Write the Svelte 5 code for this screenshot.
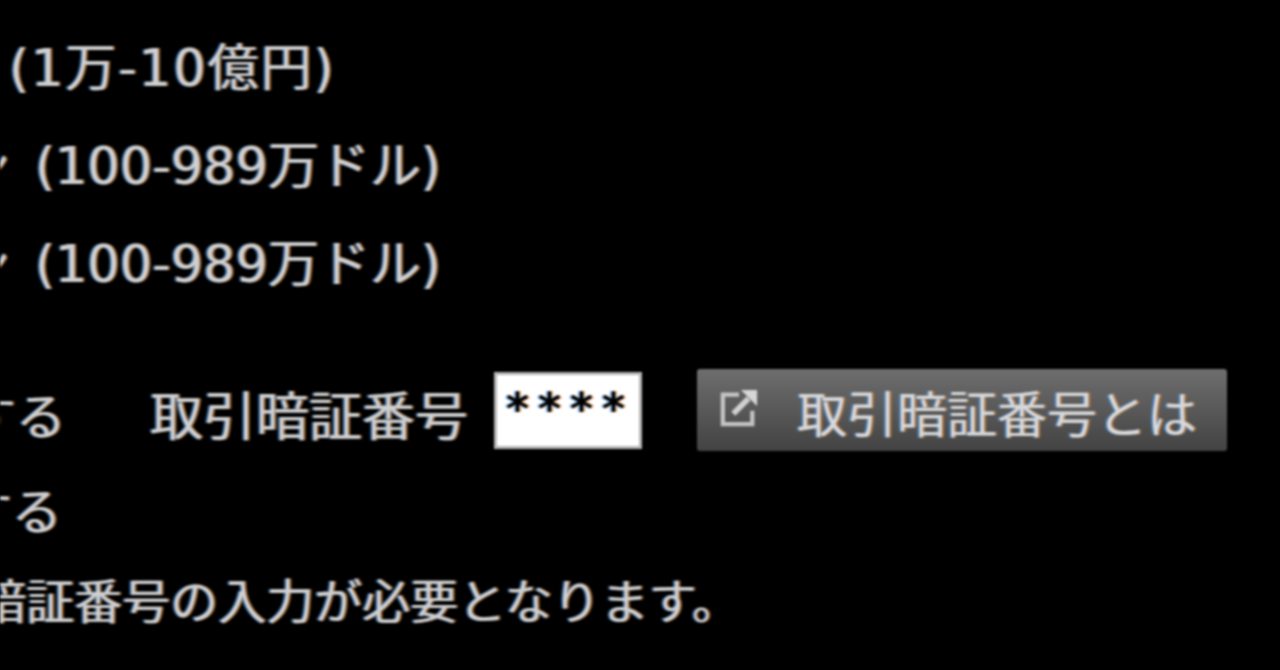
<script>
  const rows = [
    { lead: '', text: '(1万-10億円)', cls: 'r1' },
    { lead: 'ン', text: '(100-989万ドル)', cls: 'r2' },
    { lead: 'ン', text: '(100-989万ドル)', cls: 'r3' }
  ];
</script>

<main class="page">
  {#each rows as row}
    <div class="row {row.cls}">
      <span class="lead"><span>{row.lead}</span></span>
      <span class="paren">{row.text}</span>
    </div>
  {/each}

  <div class="row r4">
    <span class="lead"><span>設定する</span></span>
    <span class="label">取引暗証番号</span>
    <div class="input">****</div>
    <div class="btn">
      <svg viewBox="0 0 40 40" width="38" height="38" aria-hidden="true">
        <path d="M20 6H3v31h31V23" fill="none" stroke="#c4c4c4" stroke-width="4.5"/>
        <path d="M14 26L30 10" fill="none" stroke="#d0d0d0" stroke-width="6"/>
        <path d="M22 1H39V18z" fill="#d6d6d6"/>
      </svg>
      <span>取引暗証番号とは</span>
    </div>
  </div>
  <div class="row r5"><span class="lead"><span>設定する</span></span></div>
  <div class="row r6"><span class="lead"><span>取引暗証番号の入力が必要となります。</span></span></div>
</main>

<style>
  :global(body) {
    margin: 0;
    background: #000;
    overflow: hidden;
  }
  .page {
    width: 1280px;
    height: 670px;
    overflow: hidden;
    background: #000;
    color: #cfcfcf;
    font-family: "Noto Sans CJK JP", "Noto Sans", sans-serif;
    font-weight: 400;
    font-size: 50px;
    filter: blur(0.9px);
    text-shadow: -2px 0 rgba(70, 150, 235, 0.6), 2px 0 rgba(225, 140, 60, 0.6);
  }
  .row {
    display: flex;
    align-items: center;
    white-space: nowrap;
  }
  .lead {
    display: flex;
    justify-content: flex-end;
    overflow: hidden;
    flex: none;
  }
  .r1 { height: 98px; margin-top: 15px; }
  .r1 .lead { width: 9px; }
  .r2 { height: 98px; }
  .r2 .lead { width: 35px; }
  .r3 { height: 98px; }
  .r3 .lead { width: 35px; }
  .r2 .lead span, .r3 .lead span { margin-right: 25px; }
  .paren {
    font-family: "DejaVu Sans", "Noto Sans CJK JP", sans-serif;
    font-size: 51px;
  }
  .r1 .paren { letter-spacing: 2px; }
  .r4 { height: 82px; margin-top: 60px; }
  .r4 .lead { width: 66px; padding-top: 6px; }
  .label {
    margin-left: 84px;
    width: 326px;
    padding-top: 6px;
    font-size: 53px;
  }
  .input {
    box-sizing: border-box;
    width: 148px;
    height: 77px;
    margin-left: 18px;
    background: #fff;
    border: 3px solid #b5b5b5;
    color: #000;
    font-family: "DejaVu Sans", sans-serif;
    font-size: 44px;
    font-weight: 700;
    line-height: 68px;
    letter-spacing: 9px;
    padding-left: 9px;
  }
  .btn {
    display: flex;
    align-items: center;
    box-sizing: border-box;
    width: 530px;
    height: 82px;
    margin-left: 55px;
    padding-left: 23px;
    border-radius: 3px;
    background: linear-gradient(#6e6e6e, #434343);
    font-size: 50px;
    color: #d8d8d8;
  }
  .btn svg {
    flex: none;
    margin-bottom: 4px;
  }
  .btn span {
    margin-left: 39px;
    padding-top: 2px;
  }
  .r5 { height: 98px; margin-top: 8px; }
  .r5 .lead { width: 62px; }
  .r6 { height: 82px; font-size: 48px; }
  .r6 .lead { width: 740px; }
</style>
